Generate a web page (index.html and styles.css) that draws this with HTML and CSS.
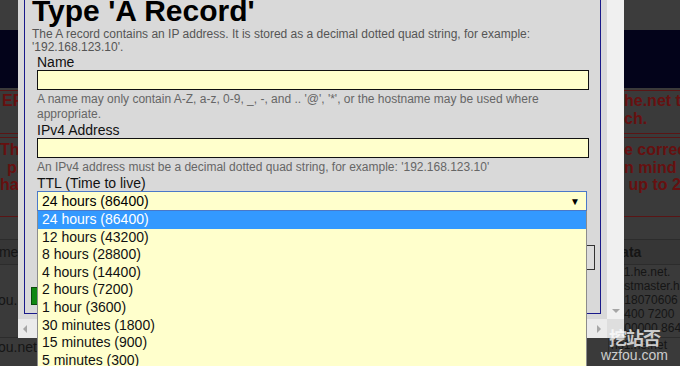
FILE: index.html
```html
<!DOCTYPE html>
<html>
<head>
    <title>Add A Record</title>
    <link rel="stylesheet" href="styles.css">
</head>
<body>
    <!-- page behind the popup (dimmed) -->
    <div class="page">
        <div class="topbar"></div>
        <div class="navband"></div>
        <div class="notice notice-short">
            <div class="line"><span class="l pad2">ERROR</span><span class="r">he.net to</span></div>
            <div class="line"><span class="l"></span><span class="r">ch.</span></div>
        </div>
        <div class="notice notice-tall">
            <div class="line"><span class="l">This</span><span class="r">e correct</span></div>
            <div class="line"><span class="l pad7">please</span><span class="r">n mind that</span></div>
            <div class="line"><span class="l">have</span><span class="r">&nbsp;up to 24</span></div>
        </div>
        <div class="records">
            <div class="rec-row rec-head"><span class="l">Name</span><span class="r">Data</span></div>
            <div class="rec-row rec-soa"><span class="l">wzfou.net</span><span class="r">ns1.he.net.<br>hostmaster.he.net.<br>2018070606<br>86400 7200<br>3600000 86400</span></div>
            <div class="rec-row"><span class="l">wzfou.net</span><span class="r">ns1.he.net</span></div>
        </div>
    </div>

    <!-- popup window -->
    <div class="frame">
        <div class="viewport">
            <div class="dialog-box">
                <h1>Type 'A Record'</h1>
                <p class="desc">The A record contains an IP address. It is stored as a decimal dotted quad string, for example: '192.168.123.10'.</p>
                <div class="fields">
                    <label for="name">Name</label>
                    <input type="text" id="name" class="field">
                    <p class="help">A name may only contain A-Z, a-z, 0-9, _, -, and .. '@', '*', or the hostname may be used where appropriate.</p>

                    <label for="ipv4">IPv4 Address</label>
                    <input type="text" id="ipv4" class="field">
                    <p class="help">An IPv4 address must be a decimal dotted quad string, for example: '192.168.123.10'</p>

                    <label for="ttl">TTL (Time to live)</label>
                    <div class="select" id="ttl">
                        <span>24 hours (86400)</span>
                        <span class="caret">&#9660;</span>
                    </div>

                    <div class="btn-row"><div class="btn-gray"></div></div>
                    <div class="btn-green"></div>
                </div>
            </div>
        </div>
        <div class="vscroll"><span class="arrow-down"></span></div>
        <div class="hscroll"><span class="arrow-left"></span><span class="arrow-right"></span></div>
        <div class="corner"></div>
    </div>

    <!-- open select list -->
    <ul class="options">
        <li class="selected">24 hours (86400)</li>
        <li>12 hours (43200)</li>
        <li>8 hours (28800)</li>
        <li>4 hours (14400)</li>
        <li>2 hours (7200)</li>
        <li>1 hour (3600)</li>
        <li>30 minutes (1800)</li>
        <li>15 minutes (900)</li>
        <li>5 minutes (300)</li>
    </ul>

    <div class="watermark">
        <div class="wm-cn">挖站否</div>
        <div class="wm-en">wzfou.com</div>
    </div>
</body>
</html>
```

FILE: styles.css
```css
body {
    margin: 0;
    width: 680px;
    height: 366px;
    overflow: hidden;
    position: relative;
    background-color: #3a3a3a;
    font-family: "Liberation Sans", Arial, sans-serif;
}

/* ---- dimmed page behind ---- */
.page {
    width: 680px;
}
.topbar {
    height: 30px;
    background: #3c3c3c;
}
.navband {
    height: 58px;
    background: #03031a;
}
.notice {
    border-top: 1px solid #5a1515;
    border-bottom: 1px solid #5a1515;
    color: #661010;
    font-weight: bold;
    font-size: 16px;
    line-height: 17.5px;
}
.notice-short {
    margin-top: 2px;
    padding: 1px 0 6px;
}
.notice-tall {
    margin-top: 3px;
    padding: 3px 0 22px;
}
.line {
    display: flex;
    justify-content: space-between;
    height: 17.5px;
}
.line .r {
    width: 56px;
    white-space: nowrap;
    overflow: hidden;
}
.pad2 { padding-left: 2px; }
.pad7 { padding-left: 7px; }

.records {
    margin-top: 22px;
    color: #151515;
    font-size: 12px;
    line-height: 14px;
}
.rec-row {
    display: flex;
    justify-content: space-between;
    border-top: 1px solid #2c2c2c;
}
.rec-row .l {
    margin-left: -23px;
    padding-top: 2px;
}
.rec-row .r {
    width: 69px;
    white-space: nowrap;
    overflow: hidden;
    border-left: 1px solid #2c2c2c;
    padding-left: 2px;
}
.rec-head {
    height: 24px;
    line-height: 24px;
    font-size: 14px;
    font-weight: bold;
    background: #363636;
}
.rec-head .l {
    margin-left: -19px;
    padding-top: 0;
    font-weight: normal;
}
.rec-head .r {
    padding-left: 3px;
}
.rec-soa {
    height: 72px;
}
.rec-soa .l {
    padding-top: 28px;
    font-size: 14px;
}
.rec-row:last-child .l {
    font-size: 14px;
}

/* ---- popup window ---- */
.frame {
    position: absolute;
    left: 18px;
    top: 0;
    width: 606px;
    height: 338px;
    display: grid;
    grid-template-columns: 589px 17px;
    grid-template-rows: 319px 19px;
    background: #d9d9d9;
}
.viewport {
    overflow: hidden;
    background: #d9d9d9;
}
.vscroll {
    background: #f0f0f0;
    display: flex;
    flex-direction: column;
    justify-content: flex-end;
    align-items: center;
    padding-bottom: 6px;
    box-sizing: border-box;
}
.hscroll {
    background: #ebebeb;
    display: flex;
    justify-content: space-between;
    align-items: center;
    padding: 0 6px 0 5px;
}
.corner {
    background: #dedede;
}
.arrow-down {
    width: 0;
    height: 0;
    border-left: 4px solid transparent;
    border-right: 4px solid transparent;
    border-top: 4px solid #a6a6a6;
}
.arrow-left {
    width: 0;
    height: 0;
    border-top: 4px solid transparent;
    border-bottom: 4px solid transparent;
    border-right: 4px solid #a6a6a6;
}
.arrow-right {
    width: 0;
    height: 0;
    border-top: 4px solid transparent;
    border-bottom: 4px solid transparent;
    border-left: 4px solid #a6a6a6;
}

.dialog-box {
    margin: -12px 6px 0 6px;
    border: 1px solid #1a1a8a;
    padding: 5px 11px 8px 6px;
    height: 326px;
    box-sizing: border-box;
}
h1 {
    margin: 0;
    font-size: 30px;
    line-height: 34px;
    color: #000;
    padding-left: 1px;
}
.desc {
    margin: 0;
    font-size: 12px;
    line-height: 13px;
    color: #555;
    padding-left: 1px;
}
.fields {
    margin-left: 6px;
}
label {
    display: block;
    font-size: 14px;
    line-height: 16px;
    color: #111;
}
.field {
    display: block;
    width: 100%;
    height: 20px;
    margin: 0;
    border: 1px solid #111;
    background: #ffffcc;
    box-sizing: border-box;
}
.help {
    margin: 2px 0 0;
    font-size: 12px;
    line-height: 15px;
    color: #666;
}
.select {
    width: 550px;
    height: 20px;
    box-sizing: border-box;
    border: 1px solid #4a78c8;
    background: #ffffcc;
    display: flex;
    justify-content: space-between;
    align-items: center;
    padding: 0 6px 0 4px;
    font-size: 14px;
    color: #000;
}
.caret {
    font-size: 10px;
}
.btn-row {
    display: flex;
    justify-content: flex-end;
    margin: 34px -6px 0 0;
}
.btn-gray {
    width: 80px;
    height: 25px;
    box-sizing: border-box;
    border: 1px solid #333;
    background: #dcdcdc;
}
.btn-green {
    margin: 17px 0 0 -6px;
    width: 70px;
    height: 18px;
    box-sizing: border-box;
    border: 1px solid #0a4a0a;
    background: #118811;
}

/* ---- open dropdown list ---- */
.options {
    position: absolute;
    left: 37px;
    top: 211px;
    width: 550px;
    margin: 0;
    padding: 0;
    list-style: none;
    box-sizing: border-box;
    border: 1px solid #8c8c8c;
    border-top: none;
    background: #ffffcc;
    font-size: 14px;
    color: #111;
}
.options li {
    height: 17.6px;
    line-height: 17.6px;
    padding-left: 4px;
}
.options .selected {
    background: #3399ff;
    color: #fff;
}

.watermark {
    position: absolute;
    right: 12px;
    bottom: 3px;
    text-align: center;
    color: rgba(255, 255, 255, 0.75);
}
.wm-cn {
    font-family: "Noto Sans CJK SC", sans-serif;
    font-weight: bold;
    font-size: 18px;
    line-height: 20px;
    letter-spacing: -1px;
}
.wm-en {
    font-size: 14px;
    line-height: 16px;
}
```
